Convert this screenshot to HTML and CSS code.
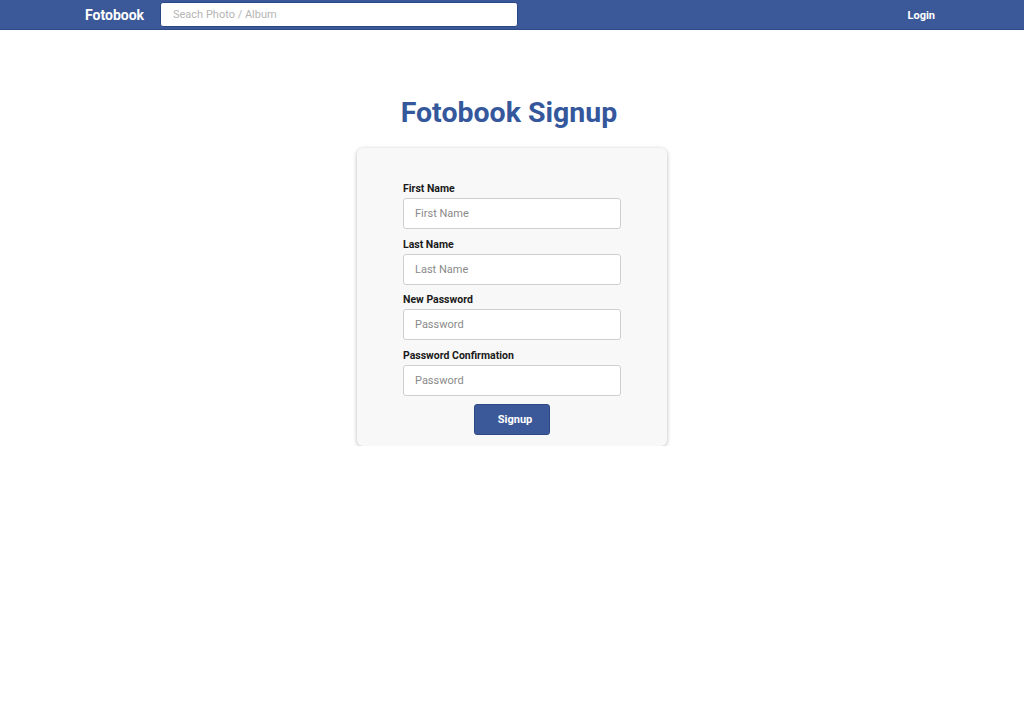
FILE: index.html
```html
<!DOCTYPE html>
<html>
<head>
<meta charset="utf-8">
<link rel="stylesheet" href="styles.css">
</head>
<body>
<nav class="navbar">
  <div class="nav-left">
    <a class="brand">Fotobook</a>
    <input class="search" type="text" placeholder="Seach Photo / Album">
  </div>
  <a class="login">Login</a>
</nav>
<main class="main">
  <h1 class="title">Fotobook Signup</h1>
  <form class="card">
    <div class="field">
      <label class="label">First Name</label>
      <input class="input" type="text" placeholder="First Name">
    </div>
    <div class="field">
      <label class="label">Last Name</label>
      <input class="input" type="text" placeholder="Last Name">
    </div>
    <div class="field">
      <label class="label">New Password</label>
      <input class="input" type="password" placeholder="Password">
    </div>
    <div class="field">
      <label class="label">Password Confirmation</label>
      <input class="input" type="password" placeholder="Password">
    </div>
    <div class="actions">
      <button class="btn" type="button">Signup</button>
    </div>
  </form>
</main>
</body>
</html>
```

FILE: styles.css
```css
* { box-sizing: border-box; }
body {
  margin: 0;
  font-family: Roboto, "Liberation Sans", Arial, sans-serif;
  background: #fff;
  color: #111;
}
.navbar {
  height: 30px;
  background: #3b5998;
  border-bottom: 1px solid #2d4a86;
  display: flex;
  align-items: center;
  justify-content: space-between;
  padding: 0 89px 0 85px;
}
.nav-left {
  display: flex;
  align-items: center;
}
.brand {
  color: #fff;
  font-weight: 700;
  font-size: 14px;
  width: 75px;
}
.search {
  width: 358px;
  height: 25px;
  border: 1px solid #2a4785;
  border-radius: 3px;
  padding: 0 12px;
  font-family: inherit;
  font-size: 11px;
  background: #fff;
  outline: none;
}
.search::placeholder { color: #b5b5b5; }
.login {
  color: #fff;
  font-weight: 700;
  font-size: 11px;
  margin-top: 2px;
}
.main {
  display: flex;
  flex-direction: column;
  align-items: center;
}
.title {
  margin: 66px 0 18px -6px;
  font-size: 28.5px;
  font-weight: 700;
  color: #34589b;
  line-height: 34px;
}
.card {
  width: 310px;
  background: #f8f8f8;
  border-radius: 6px;
  box-shadow: 0 1px 4px rgba(0,0,0,0.28);
  padding: 34px 46px 11px;
  display: flex;
  flex-direction: column;
}
.field {
  display: flex;
  flex-direction: column;
  margin-bottom: 8.5px;
}
.label {
  font-size: 10.5px;
  font-weight: 700;
  line-height: 14px;
  margin-bottom: 2px;
  color: #1a1a1a;
}
.input {
  height: 31px;
  border: 1px solid #cfcfcf;
  border-radius: 3px;
  background: #fff;
  padding: 0 11px;
  font-family: inherit;
  font-size: 11px;
  outline: none;
}
.input::placeholder { color: #8a8a8a; }
.actions {
  display: flex;
  justify-content: center;
}
.btn {
  width: 76px;
  height: 31px;
  background: #3b5998;
  border: 1px solid #2d4a86;
  border-radius: 3px;
  color: #fff;
  font-family: inherit;
  font-weight: 700;
  font-size: 11px;
  padding: 0 0 0 6px;
}
```
